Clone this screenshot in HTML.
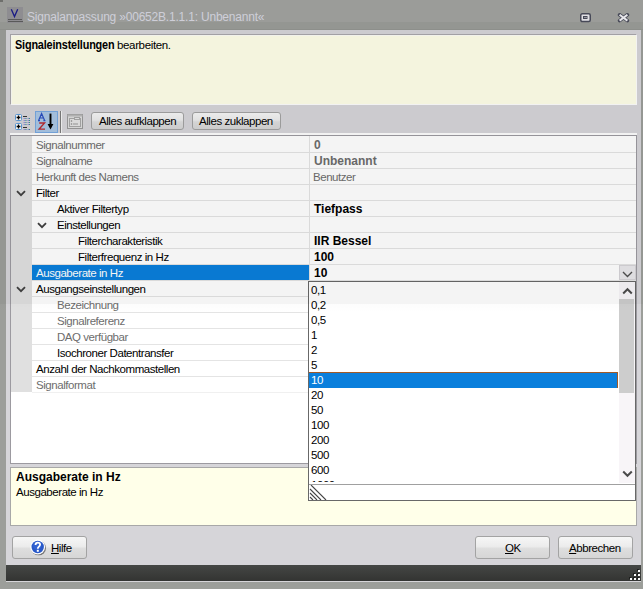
<!DOCTYPE html><html><head><meta charset="utf-8"><style>
*{margin:0;padding:0;box-sizing:border-box}
html,body{width:643px;height:589px;overflow:hidden;background:#9c9e9a;font-family:"Liberation Sans",sans-serif;font-size:11.5px;letter-spacing:-0.45px;color:#000}
div,svg{position:absolute}
.t{white-space:nowrap;line-height:15px}
.btn{border:1px solid #a3a3a3;border-radius:3px;background:linear-gradient(#f6f6f6 0%,#ececec 45%,#dedede 55%,#d6d6d6 100%)}
.row{left:32px;width:604px;height:15px;background:#fff}
.sep{left:32px;width:604px;height:1px;background:#e4e4e4}
.g{color:#6d6d6d}
.v{font-size:12px;font-weight:bold;letter-spacing:0}
</style></head><body>
<div style="left:0;top:0;width:643px;height:22px;background:#a2a4a0"></div>
<div style="left:0;top:22px;width:643px;height:7px;background:#9b9d99"></div>
<div style="left:0;top:29px;width:643px;height:1px;background:#949692"></div>
<div style="left:0;top:0;width:3px;height:2px;background:#737571"></div>
<div style="left:7px;top:7px;width:16px;height:16px;background:#959498"></div>
<svg style="left:7px;top:7px" width="16" height="16" viewBox="0 0 16 16"><path d="M4.3 2.3 L7.5 9.6 L10.7 2.3" fill="none" stroke="#1c1c8c" stroke-width="1.3"/><rect x="1" y="12" width="14" height="1" fill="#5e5e5e"/><rect x="1" y="14" width="15" height="1" fill="#5e5e5e"/></svg>
<div class="t" style="left:27px;top:10px;font-size:12px;letter-spacing:-0.2px;color:#d8d8e2">Signalanpassung »00652B.1.1.1: Unbenannt«</div>
<svg style="left:579px;top:12px" width="13" height="11" viewBox="0 0 13 11"><rect x="1.75" y="1.75" width="9.5" height="7.8" rx="1.5" fill="#ecebf0" stroke="#4b4d5c" stroke-width="1.5"/><rect x="4.5" y="4.5" width="3.5" height="2" fill="#9a9ba6" stroke="#4b4d5c" stroke-width="1"/></svg>
<svg style="left:617px;top:12px" width="14" height="11" viewBox="0 0 14 11"><path d="M2.6 2.8 L10.4 8.6 M10.4 2.8 L2.6 8.6" stroke="#4b4d5c" stroke-width="3.6" stroke-linecap="round"/><path d="M2.6 2.8 L10.4 8.6 M10.4 2.8 L2.6 8.6" stroke="#f2f1f5" stroke-width="2" stroke-linecap="butt"/></svg>
<div style="left:6px;top:30px;width:635px;height:552px;background:#d6d5d9"></div>
<div style="left:10px;top:34px;width:627px;height:71px;background:#ffffe9;border-top:1px solid #aaa8ac;border-left:1px solid #aaa8ac;border-bottom:1px solid #fdfdfd;border-right:1px solid #fdfdfd;box-shadow:inset 1px 1px #fdfdf6"></div>
<div class="t" style="left:15px;top:38px;font-size:12.5px;font-weight:bold;letter-spacing:-0.2px;transform:scaleX(0.87);transform-origin:0 0">Signaleinstellungen</div>
<div class="t" style="left:117px;top:38px;font-size:11.5px;letter-spacing:-0.35px">bearbeiten.</div>
<svg style="left:13px;top:112px" width="20" height="20" viewBox="0 0 20 20">
<rect x="2.5" y="2.5" width="6" height="6" rx="1" fill="#fff" stroke="#5a9ad8"/><path d="M3.6 5.5h3.8M5.5 3.6v3.8" stroke="#000" stroke-width="1.3"/>
<rect x="2.5" y="11.5" width="6" height="6" rx="1" fill="#fff" stroke="#5a9ad8"/><path d="M3.6 14.5h3.8M5.5 12.6v3.8" stroke="#000" stroke-width="1.3"/>
<path d="M10 4.5h4" stroke="#333" stroke-width="1"/>
<path d="M10.5 6.5h2M14.5 6.5h1.5M10.5 8.5h2M14.5 8.5h1.5M10.5 10.5h2M14.5 10.5h1.5M10.5 12.5h2M14.5 12.5h1.5M10.5 17.5h2M14.5 17.5h1.5" stroke="#9a90d8" stroke-width="1"/>
<path d="M12.5 6.5h1M16 6.5h1M12.5 8.5h1M16 8.5h1M12.5 10.5h1M16 10.5h1M12.5 12.5h1M16 12.5h1M12.5 17.5h1M16 17.5h1" stroke="#3a9a8a" stroke-width="1"/>
<path d="M10 15.5h4" stroke="#333" stroke-width="1"/>
</svg>
<div style="left:35px;top:111px;width:23px;height:22px;background:#aac6e4;border:1px solid #78a8e0"></div>
<svg style="left:36px;top:112px" width="22" height="20" viewBox="0 0 22 20">
<path d="M2.6 8.6 L5.6 1.6 L8.6 8.6 M3.8 6 H7.4 M2 8.6 H4 M7.4 8.6 H9.4" fill="none" stroke="#2a4ec0" stroke-width="1.2"/>
<path d="M3.2 11 H8.6 L3 17.2 H9" fill="none" stroke="#b82a30" stroke-width="1.3"/>
<path d="M14.5 1.6 V15" stroke="#000" stroke-width="1.9"/><path d="M11.6 12 L14.5 17.6 L17.4 12 Z" fill="#000"/>
</svg>
<div style="left:60px;top:111px;width:1px;height:22px;background:#7c7c7c"></div>
<div style="left:61px;top:111px;width:1px;height:22px;background:#f4f4f4"></div>
<svg style="left:67px;top:114px" width="16" height="15" viewBox="0 0 16 15">
<rect x="0.5" y="0.5" width="15" height="14" fill="#dedede" stroke="#9a9a9a"/>
<rect x="0.5" y="0.5" width="15" height="2" fill="#b8b8b8"/>
<rect x="2.5" y="4.5" width="11" height="8" fill="#e4e4e4" stroke="#a8a8a8"/>
<rect x="7.5" y="3.5" width="5" height="2" fill="#e4e4e4" stroke="#a8a8a8"/>
<circle cx="4.5" cy="7" r="0.8" fill="#888"/><circle cx="4.5" cy="10" r="0.8" fill="#888"/><path d="M6 10h5" stroke="#999"/>
</svg>
<div class="btn" style="left:91px;top:112px;width:93px;height:18px"></div>
<div class="t" style="left:99px;top:114px">Alles aufklappen</div>
<div class="btn" style="left:192px;top:112px;width:89px;height:18px"></div>
<div class="t" style="left:199px;top:114px">Alles zuklappen</div>
<div style="left:10px;top:133px;width:627px;height:2px;background:#fdfdfd"></div>
<div style="left:10px;top:135px;width:627px;height:329px;background:#fff;border:1px solid #9c9aa0"></div>
<div style="left:11px;top:136px;width:21px;height:256px;background:#e0e0e0"></div>
<div class="sep" style="top:152px"></div>
<div class="t g" style="left:36px;top:138px">Signalnummer</div>
<div class="t v" style="left:314px;top:138px;color:#6d6d6d">0</div>
<div class="sep" style="top:168px"></div>
<div class="t g" style="left:36px;top:154px">Signalname</div>
<div class="t v" style="left:314px;top:154px;color:#6d6d6d">Unbenannt</div>
<div class="sep" style="top:184px"></div>
<div class="t g" style="left:36px;top:170px">Herkunft des Namens</div>
<div class="t g" style="left:313px;top:170px">Benutzer</div>
<div class="sep" style="top:200px"></div>
<div class="t" style="left:36px;top:186px">Filter</div>
<svg style="left:16px;top:190px" width="10" height="7" viewBox="0 0 10 7"><path d="M1 1.2 L5 5.2 L9 1.2" fill="none" stroke="#404040" stroke-width="1.8"/></svg>
<div class="sep" style="top:216px"></div>
<div class="t" style="left:57px;top:202px">Aktiver Filtertyp</div>
<div class="t v" style="left:314px;top:202px">Tiefpass</div>
<div class="sep" style="top:232px"></div>
<div class="t" style="left:57px;top:218px">Einstellungen</div>
<svg style="left:37px;top:222px" width="10" height="7" viewBox="0 0 10 7"><path d="M1 1.2 L5 5.2 L9 1.2" fill="none" stroke="#404040" stroke-width="1.8"/></svg>
<div class="sep" style="top:248px"></div>
<div class="t" style="left:78px;top:234px">Filtercharakteristik</div>
<div class="t v" style="left:314px;top:234px">IIR Bessel</div>
<div class="sep" style="top:264px"></div>
<div class="t" style="left:78px;top:250px">Filterfrequenz in Hz</div>
<div class="t v" style="left:314px;top:250px">100</div>
<div class="sep" style="top:280px"></div>
<div style="left:32px;top:265px;width:277px;height:15px;background:#0a7fdc"></div>
<div class="t" style="left:36px;top:266px;color:#fff">Ausgaberate in Hz</div>
<div class="t v" style="left:314px;top:266px">10</div>
<div class="sep" style="top:296px"></div>
<div class="t" style="left:36px;top:282px">Ausgangseinstellungen</div>
<svg style="left:16px;top:286px" width="10" height="7" viewBox="0 0 10 7"><path d="M1 1.2 L5 5.2 L9 1.2" fill="none" stroke="#404040" stroke-width="1.8"/></svg>
<div class="sep" style="top:312px"></div>
<div class="t g" style="left:57px;top:298px">Bezeichnung</div>
<div class="sep" style="top:328px"></div>
<div class="t g" style="left:57px;top:314px">Signalreferenz</div>
<div class="sep" style="top:344px"></div>
<div class="t g" style="left:57px;top:330px">DAQ verfügbar</div>
<div class="sep" style="top:360px"></div>
<div class="t" style="left:57px;top:346px">Isochroner Datentransfer</div>
<div class="sep" style="top:376px"></div>
<div class="t" style="left:36px;top:362px">Anzahl der Nachkommastellen</div>
<div class="t g" style="left:36px;top:378px">Signalformat</div>
<div style="left:32px;top:392px;width:604px;height:1px;background:#f0f0f0"></div>
<div style="left:309px;top:136px;width:1px;height:256px;background:#e4e4e4"></div>
<div style="left:619px;top:265px;width:17px;height:15px;background:#e9e7eb;border:1px solid #d6d4d8"></div>
<svg style="left:622px;top:271px" width="11" height="7" viewBox="0 0 11 7"><path d="M1 1 L5.5 5.5 L10 1" fill="none" stroke="#505050" stroke-width="1.4"/></svg>
<div style="left:10px;top:467px;width:627px;height:59px;background:#ffffe9;border:1px solid #a8a8a8"></div>
<div class="t v" style="left:16px;top:470px">Ausgaberate in Hz</div>
<div class="t" style="left:16px;top:485px">Ausgaberate in Hz</div>
<div style="left:308px;top:281px;width:328px;height:220px;background:#fff;border:1px solid #686868"></div>
<div style="left:309px;top:372px;width:309px;height:16px;background:#0a7fdc;border-top:1px solid #a05a28;border-right:1px solid #a05a28"></div>
<div style="left:309px;top:282px;width:310px;height:200px;overflow:hidden"><div class="t" style="left:2px;top:1px;">0,1</div><div class="t" style="left:2px;top:16px;">0,2</div><div class="t" style="left:2px;top:31px;">0,5</div><div class="t" style="left:2px;top:46px;">1</div><div class="t" style="left:2px;top:61px;">2</div><div class="t" style="left:2px;top:76px;">5</div><div class="t" style="left:2px;top:91px;color:#fff;">10</div><div class="t" style="left:2px;top:106px;">20</div><div class="t" style="left:2px;top:121px;">50</div><div class="t" style="left:2px;top:136px;">100</div><div class="t" style="left:2px;top:151px;">200</div><div class="t" style="left:2px;top:166px;">500</div><div class="t" style="left:2px;top:181px;">600</div><div class="t" style="left:2px;top:196px;">1000</div></div>
<div style="left:619px;top:282px;width:16px;height:201px;background:#f8f5f8"></div>
<div style="left:619px;top:282px;width:16px;height:17px;background:#f7f5f8"></div>
<svg style="left:622px;top:287px" width="11" height="8" viewBox="0 0 11 8"><path d="M1.2 6.5 L5.5 2.2 L9.8 6.5" fill="none" stroke="#4c4c4c" stroke-width="2"/></svg>
<div style="left:619px;top:299px;width:15px;height:94px;background:#cdcdcd"></div>
<svg style="left:622px;top:470px" width="11" height="8" viewBox="0 0 11 8"><path d="M1.2 1.5 L5.5 5.8 L9.8 1.5" fill="none" stroke="#4c4c4c" stroke-width="2"/></svg>
<div style="left:309px;top:484px;width:326px;height:1px;background:#a0a0a0"></div>
<svg style="left:309px;top:485px" width="18" height="15" viewBox="0 0 18 15"><g stroke="#444" stroke-width="1.1"><path d="M2 0 L17 15"/><path d="M1 4 L12 15"/><path d="M1 8 L8 15"/><path d="M1 12 L4 15"/></g></svg>
<div class="btn" style="left:12px;top:536px;width:75px;height:23px"></div>
<svg style="left:29px;top:538px" width="19" height="19" viewBox="0 0 19 19">
<circle cx="9.6" cy="9.9" r="7.4" fill="#222" opacity="0.55"/>
<circle cx="8.7" cy="9" r="7.4" fill="#fff"/>
<circle cx="8.7" cy="9" r="6.2" fill="#2858c8"/>
<circle cx="8.2" cy="7.5" r="4" fill="#3a6ad8" opacity="0.6"/>
<path d="M6.5 7 Q6.6 4.6 8.8 4.6 Q11.1 4.6 11.1 6.6 Q11.1 7.9 9.8 8.7 Q8.8 9.3 8.8 10.8" fill="none" stroke="#fff" stroke-width="1.8"/>
<rect x="7.8" y="11.8" width="2" height="2" fill="#fff"/>
</svg>
<div class="t" style="left:51px;top:541px"><u>H</u>ilfe</div>
<div class="btn" style="left:475px;top:536px;width:75px;height:23px"></div>
<div class="t" style="left:505px;top:541px"><u>O</u>K</div>
<div class="btn" style="left:558px;top:536px;width:75px;height:23px"></div>
<div class="t" style="left:569px;top:541px"><u>A</u>bbrechen</div>
<div style="left:6px;top:565px;width:635px;height:16px;background:linear-gradient(#454745,#333432)"></div>
<svg style="left:628px;top:568px" width="13" height="13" viewBox="0 0 13 13">
<g fill="#1e1f1e"><rect x="9" y="1" width="2" height="2"/><rect x="5" y="5" width="2" height="2"/><rect x="9" y="5" width="2" height="2"/><rect x="1" y="9" width="2" height="2"/><rect x="5" y="9" width="2" height="2"/><rect x="9" y="9" width="2" height="2"/></g>
<g fill="#fff"><rect x="10" y="2" width="2" height="2"/><rect x="6" y="6" width="2" height="2"/><rect x="10" y="6" width="2" height="2"/><rect x="2" y="10" width="2" height="2"/><rect x="6" y="10" width="2" height="2"/><rect x="10" y="10" width="2" height="2"/></g>
</svg>
<div style="left:0;top:0;width:643px;height:304px;background:rgba(0,0,0,0.045)"></div>
<div style="left:0;top:304px;width:643px;height:8px;background:linear-gradient(rgba(0,0,0,0.012),rgba(0,0,0,0))"></div>
</body></html>
